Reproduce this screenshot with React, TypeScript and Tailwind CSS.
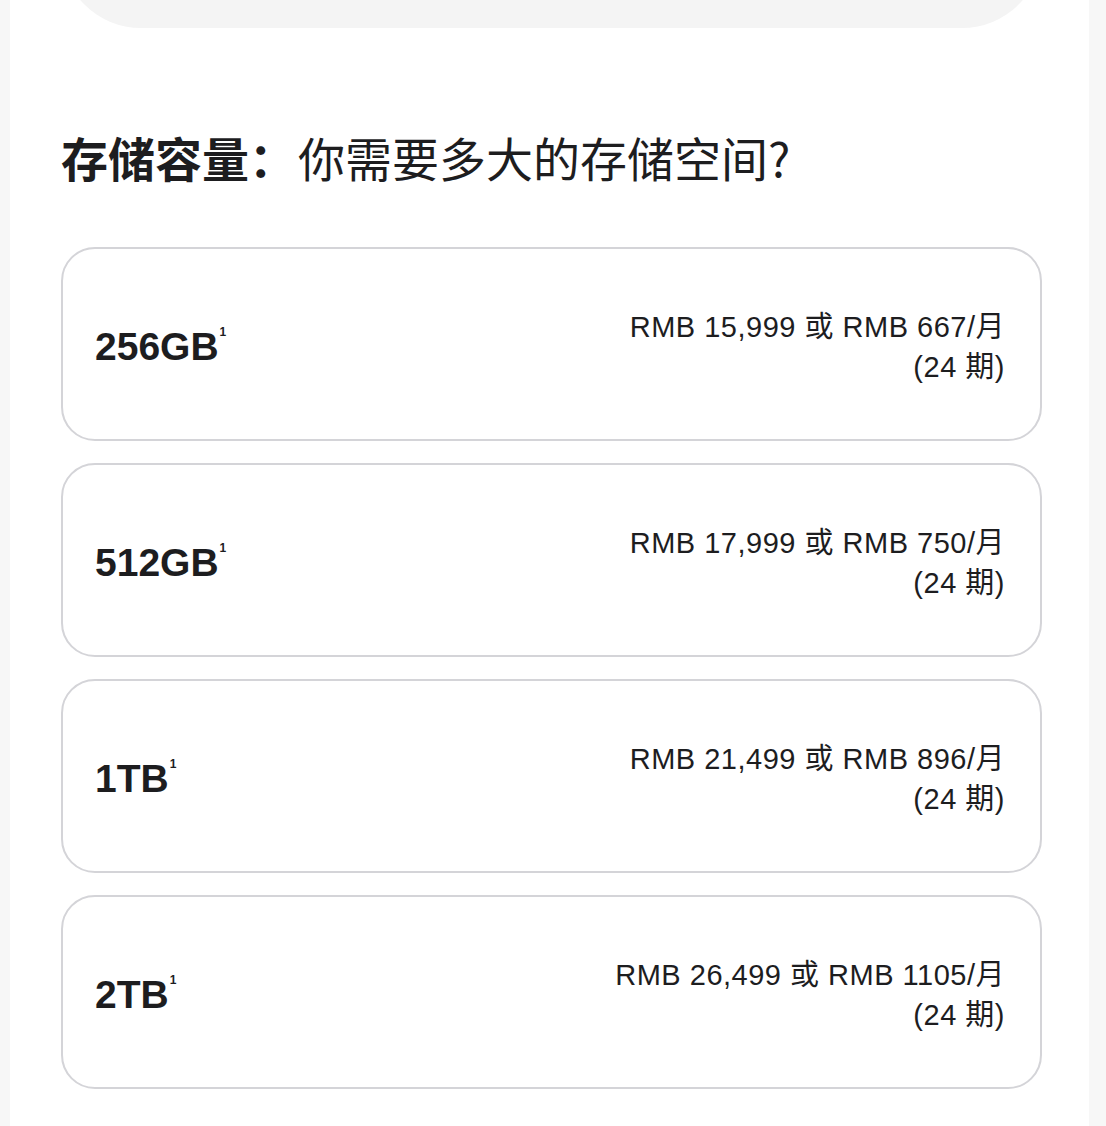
import React from "react";

type Option = {
  size: string;
  price: string;
  monthly: string;
};

const options: Option[] = [
  { size: "256GB", price: "RMB 15,999", monthly: "RMB 667/月" },
  { size: "512GB", price: "RMB 17,999", monthly: "RMB 750/月" },
  { size: "1TB", price: "RMB 21,499", monthly: "RMB 896/月" },
  { size: "2TB", price: "RMB 26,499", monthly: "RMB 1105/月" },
];

const latin = { fontFamily: '"Liberation Sans", "Noto Sans CJK SC", sans-serif' };
const cjk = { fontFamily: '"Noto Sans CJK SC", "Liberation Sans", sans-serif' };

function CapacityCard({ option }: { option: Option }) {
  return (
    <div className="flex h-[194px] items-center justify-between rounded-[34px] border-2 border-[#d4d4d8] bg-white pl-[32px] pr-[35px] pt-[6px] text-[#1d1d1f]">
      <div className="flex items-start" style={latin}>
        <span className="text-[39px] font-bold leading-[44px]">{option.size}</span>
        <span className="ml-[1px] mt-[1px] text-[12px] font-bold leading-none">1</span>
      </div>
      <div className="text-right text-[29px] leading-[40px] tracking-[0.5px]" style={latin}>
        <div>
          {option.price} 或 {option.monthly}
        </div>
        <div>(24 期)</div>
      </div>
    </div>
  );
}

export default function App() {
  return (
    <div className="flex h-[1126px] w-full overflow-hidden bg-[#f7f7f7]">
      <div className="ml-[10px] w-[1079px] bg-white pl-[51px] pr-[47px]">
        {/* summary panel above, scrolled mostly out of view */}
        <div className="-mt-[80px] h-[108px] rounded-b-[80px] bg-[#f4f4f4]" />

        <h2
          className="mt-[101px] text-[47px] leading-[56px] text-[#1d1d1f]"
          style={cjk}
        >
          <span className="font-bold">存储容量：</span>
          <span className="ml-[2px] font-normal">你需要多大的存储空间?</span>
        </h2>

        <div className="mt-[62px] flex flex-col gap-[22px]">
          {options.map((o) => (
            <CapacityCard key={o.size} option={o} />
          ))}
        </div>
      </div>
    </div>
  );
}
